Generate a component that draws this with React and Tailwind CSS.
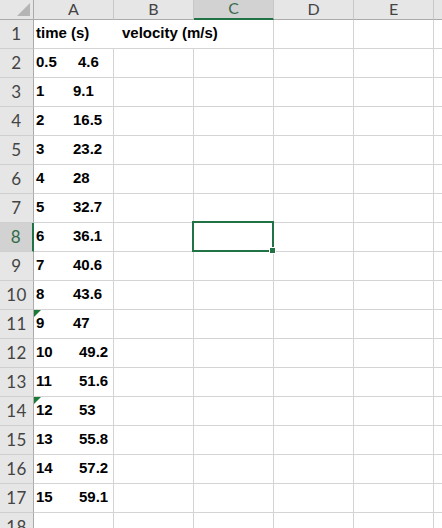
import React from "react";

const cols = ["A", "B", "C", "D", "E"];

// first value, second value, left offset class for the second value
const rows = [
  ["0.5", "4.6", "w-[42px]"],
  ["1", "9.1", "w-[37px]"],
  ["2", "16.5", "w-[37px]"],
  ["3", "23.2", "w-[37px]"],
  ["4", "28", "w-[37px]"],
  ["5", "32.7", "w-[37px]"],
  ["6", "36.1", "w-[37px]"],
  ["7", "40.6", "w-[37px]"],
  ["8", "43.6", "w-[37px]"],
  ["9", "47", "w-[37px]"],
  ["10", "49.2", "w-[43px]"],
  ["11", "51.6", "w-[43px]"],
  ["12", "53", "w-[43px]"],
  ["13", "55.8", "w-[43px]"],
  ["14", "57.2", "w-[43px]"],
  ["15", "59.1", "w-[43px]"],
];

const headFont = { fontFamily: "Lato, 'Noto Sans', sans-serif" };
const cellFont = { fontFamily: "'Liberation Sans', Arial, sans-serif" };

const TextFlag = () => (
  <svg className="absolute left-0 top-0" width="7" height="7" viewBox="0 0 7 7">
    <polygon points="0,0 7,0 0,7" fill="#1b7a36" />
  </svg>
);

const RowHeader = ({ n, active }) => (
  <div
    style={headFont}
    className={`w-[34px] shrink-0 h-full flex items-center justify-center text-[17px] tracking-[0.5px] border-b border-[#cfcfcf] ${
      active
        ? "bg-[#d2d2d2] text-[#2f6a47] border-r-2 border-r-[#217346]"
        : "bg-[#e6e6e6] text-[#444] border-r border-r-[#ababab]"
    }`}
  >
    {n}
  </div>
);

const Cell = ({ children, noRight, className = "" }) => (
  <div
    className={`w-[80px] shrink-0 h-full border-b border-[#d4d4d4] ${
      noRight ? "" : "border-r border-r-[#d4d4d4]"
    } ${className}`}
  >
    {children}
  </div>
);

const App = () => {
  return (
    <div className="w-[442px] h-[528px] overflow-hidden bg-white select-none">
      {/* Column headers */}
      <div className="flex h-[20px]">
        <div className="w-[34px] shrink-0 h-full bg-[#e6e6e6] border-b border-r border-[#ababab] relative">
          <svg className="absolute left-0 top-0" width="33" height="19" viewBox="0 0 33 19">
            <polygon points="30,3 30,16 17,16" fill="#b5b5b5" />
          </svg>
        </div>
        {cols.map((c) => (
          <div
            key={c}
            style={headFont}
            className={`w-[80px] shrink-0 h-full flex items-center justify-center text-[16px] leading-none border-r border-r-[#c8c8c8] ${
              c === "C"
                ? "bg-[#d2d2d2] text-[#3b6b4f] border-b-2 border-b-[#217346]"
                : "bg-[#e6e6e6] text-[#444] border-b border-b-[#ababab]"
            }`}
          >
            <span className="pb-[2px]">{c}</span>
          </div>
        ))}
        <div className="flex-1 h-full bg-[#e6e6e6] border-b border-[#ababab]" />
      </div>

      {/* Row 1 */}
      <div className="flex h-[29px]">
        <RowHeader n={1} />
        <Cell noRight className="relative">
          <div
            style={cellFont}
            className="absolute left-[2px] top-[4px] whitespace-nowrap text-[15px] leading-[17px] font-bold text-black"
          >
            <span className="inline-block w-[86px]">time (s)</span>
            <span>velocity (m/s)</span>
          </div>
        </Cell>
        <Cell noRight />
        <Cell />
        <Cell />
        <Cell />
        <div className="flex-1 h-full border-b border-[#d4d4d4]" />
      </div>

      {/* Data rows */}
      {rows.map(([a, b, w], i) => {
        const n = i + 2;
        return (
          <div key={n} className="flex h-[29px]">
            <RowHeader n={n} active={n === 8} />
            <Cell className="relative">
              {(n === 11 || n === 14) && <TextFlag />}
              <div
                style={cellFont}
                className="pl-[2px] pt-[4px] whitespace-nowrap text-[15px] leading-[17px] font-bold text-black"
              >
                <span className={`inline-block ${w}`}>{a}</span>
                <span>{b}</span>
              </div>
            </Cell>
            <Cell />
            <Cell className={n === 8 ? "relative" : ""}>
              {n === 8 && (
                <div className="absolute -left-[2px] -top-[2px] -right-[1px] -bottom-[1px] border-2 border-[#217346] z-10">
                  <div className="absolute -right-[4px] -bottom-[4px] w-[7px] h-[7px] bg-[#217346] border border-white" />
                </div>
              )}
            </Cell>
            <Cell />
            <Cell />
            <div className="flex-1 h-full border-b border-[#d4d4d4]" />
          </div>
        );
      })}

      {/* Row 18 (partially visible) */}
      <div className="flex h-[29px]">
        <RowHeader n={18} />
        <Cell />
        <Cell />
        <Cell />
        <Cell />
        <Cell />
        <div className="flex-1 h-full border-b border-[#d4d4d4]" />
      </div>
    </div>
  );
};

export default App;
